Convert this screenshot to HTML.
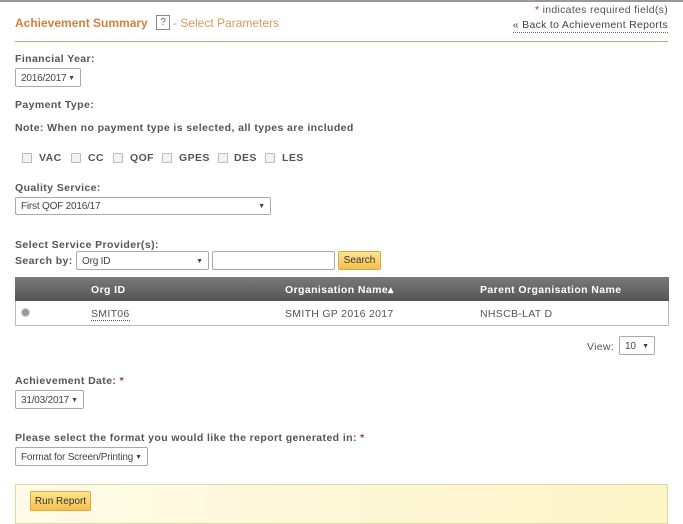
<!DOCTYPE html>
<html><head><style>
body{margin:0;width:683px;height:512px;background:#fff;font-family:"Liberation Sans",sans-serif;color:#555;position:relative;overflow:hidden}
div,span{position:absolute}
.b{font-weight:bold;font-size:10.5px;letter-spacing:0.4px;color:#555}
.t{font-size:10.5px;letter-spacing:0.3px;color:#555}
.sel{border:1px solid #aaa;border-radius:2px;background:#fff;font-size:10px;color:#444;height:17px;line-height:17px;padding-left:5px;box-sizing:border-box;font-family:"Liberation Sans Narrow","Liberation Sans",sans-serif;letter-spacing:-0.2px}
.sel i{position:absolute;right:5px;top:0;font-style:normal;font-size:7px;letter-spacing:0}
.cb{width:8px;height:8px;border:1px solid #bbb;background:#f2f2f2;border-radius:1px}
.btn{background:linear-gradient(#fde48e,#f5c04d);border:1px solid #d8a84a;border-radius:2px;font-size:10px;color:#333;text-align:center;box-sizing:border-box;font-family:"Liberation Sans Narrow","Liberation Sans",sans-serif}
.req{color:#a33}
</style></head><body>
<div style="left:0;top:0;width:683px;height:2px;background:#999"></div>
<div style="left:15px;top:16px;font-size:12px;font-weight:bold;color:#d2813a">Achievement Summary</div>
<div style="left:156px;top:15px;width:12px;height:13px;border:1px solid #888;font-size:10px;text-align:center;line-height:13px;color:#666">?</div>
<div style="left:173px;top:16px;font-size:12px;color:#d89a5a">- Select Parameters</div>
<div class="t" style="right:15px;top:4px"><span class="req" style="position:static">*</span> indicates required field(s)</div>
<div class="t" style="right:15px;top:19px;color:#444;border-bottom:1px dotted #666;line-height:13px">« Back to Achievement Reports</div>
<div style="left:15px;top:41px;width:653px;height:1px;background:#c9a57e"></div>
<div class="b" style="left:15px;top:53px">Financial Year:</div>
<div class="sel" style="left:15px;top:68px;width:66px;height:19px;line-height:19px">2016/2017<i>▼</i></div>
<div class="b" style="left:15px;top:99px">Payment Type:</div>
<div class="b" style="left:15px;top:122px">Note: When no payment type is selected, all types are included</div>
<div class="cb" style="left:22px;top:153px"></div><div class="b" style="left:39px;top:152px">VAC</div>
<div class="cb" style="left:71px;top:153px"></div><div class="b" style="left:88px;top:152px">CC</div>
<div class="cb" style="left:113px;top:153px"></div><div class="b" style="left:130px;top:152px">QOF</div>
<div class="cb" style="left:162px;top:153px"></div><div class="b" style="left:179px;top:152px">GPES</div>
<div class="cb" style="left:218px;top:153px"></div><div class="b" style="left:234px;top:152px">DES</div>
<div class="cb" style="left:265px;top:153px"></div><div class="b" style="left:282px;top:152px">LES</div>
<div class="b" style="left:15px;top:182px">Quality Service:</div>
<div class="sel" style="left:15px;top:197px;width:256px;height:18px;line-height:18px">First QOF 2016/17<i>▼</i></div>
<div class="b" style="left:15px;top:239px">Select Service Provider(s):</div>
<div class="b" style="left:15px;top:255px">Search by:</div>
<div class="sel" style="left:76px;top:251px;width:133px;height:19px;line-height:19px">Org ID<i>▼</i></div>
<div style="left:212px;top:251px;width:123px;height:19px;border:1px solid #aaa;border-radius:2px;box-sizing:border-box"></div>
<div class="btn" style="left:338px;top:251px;width:43px;height:19px;line-height:17px">Search</div>
<div style="left:15px;top:277px;width:654px;height:49px;border:1px solid #bbb;box-sizing:border-box"></div>
<div style="left:15px;top:277px;width:654px;height:24px;background:linear-gradient(#7a7a7a,#555)"></div>
<div class="b" style="left:91px;top:284px;color:#fff">Org ID</div>
<div class="b" style="left:285px;top:284px;color:#fff">Organisation Name▴</div>
<div class="b" style="left:480px;top:284px;color:#fff">Parent Organisation Name</div>
<div style="left:21px;top:308px;width:7px;height:7px;border-radius:50%;background:#999;border:1px solid #ccc"></div>
<div class="t" style="left:91px;top:308px;border-bottom:1px dotted #555;line-height:12px">SMIT06</div>
<div class="t" style="left:285px;top:308px">SMITH GP 2016 2017</div>
<div class="t" style="left:480px;top:308px">NHSCB-LAT D</div>
<div class="t" style="left:587px;top:341px">View:</div>
<div class="sel" style="left:619px;top:336px;width:36px;height:19px;line-height:19px">10<i>▼</i></div>
<div class="b" style="left:15px;top:375px">Achievement Date: <span class="req" style="position:static">*</span></div>
<div class="sel" style="left:15px;top:390px;width:69px;height:19px;line-height:19px">31/03/2017<i>▼</i></div>
<div class="b" style="left:15px;top:432px">Please select the format you would like the report generated in: <span class="req" style="position:static">*</span></div>
<div class="sel" style="left:15px;top:447px;width:133px;height:19px;line-height:19px">Format for Screen/Printing<i>▼</i></div>
<div style="left:15px;top:484px;width:653px;height:40px;border:1px solid #e2d9a0;background:linear-gradient(90deg,#fffbe8,#fdf4c8);box-sizing:border-box"></div>
<div class="btn" style="left:30px;top:491px;width:61px;height:20px;line-height:19px">Run Report</div>
</body></html>
